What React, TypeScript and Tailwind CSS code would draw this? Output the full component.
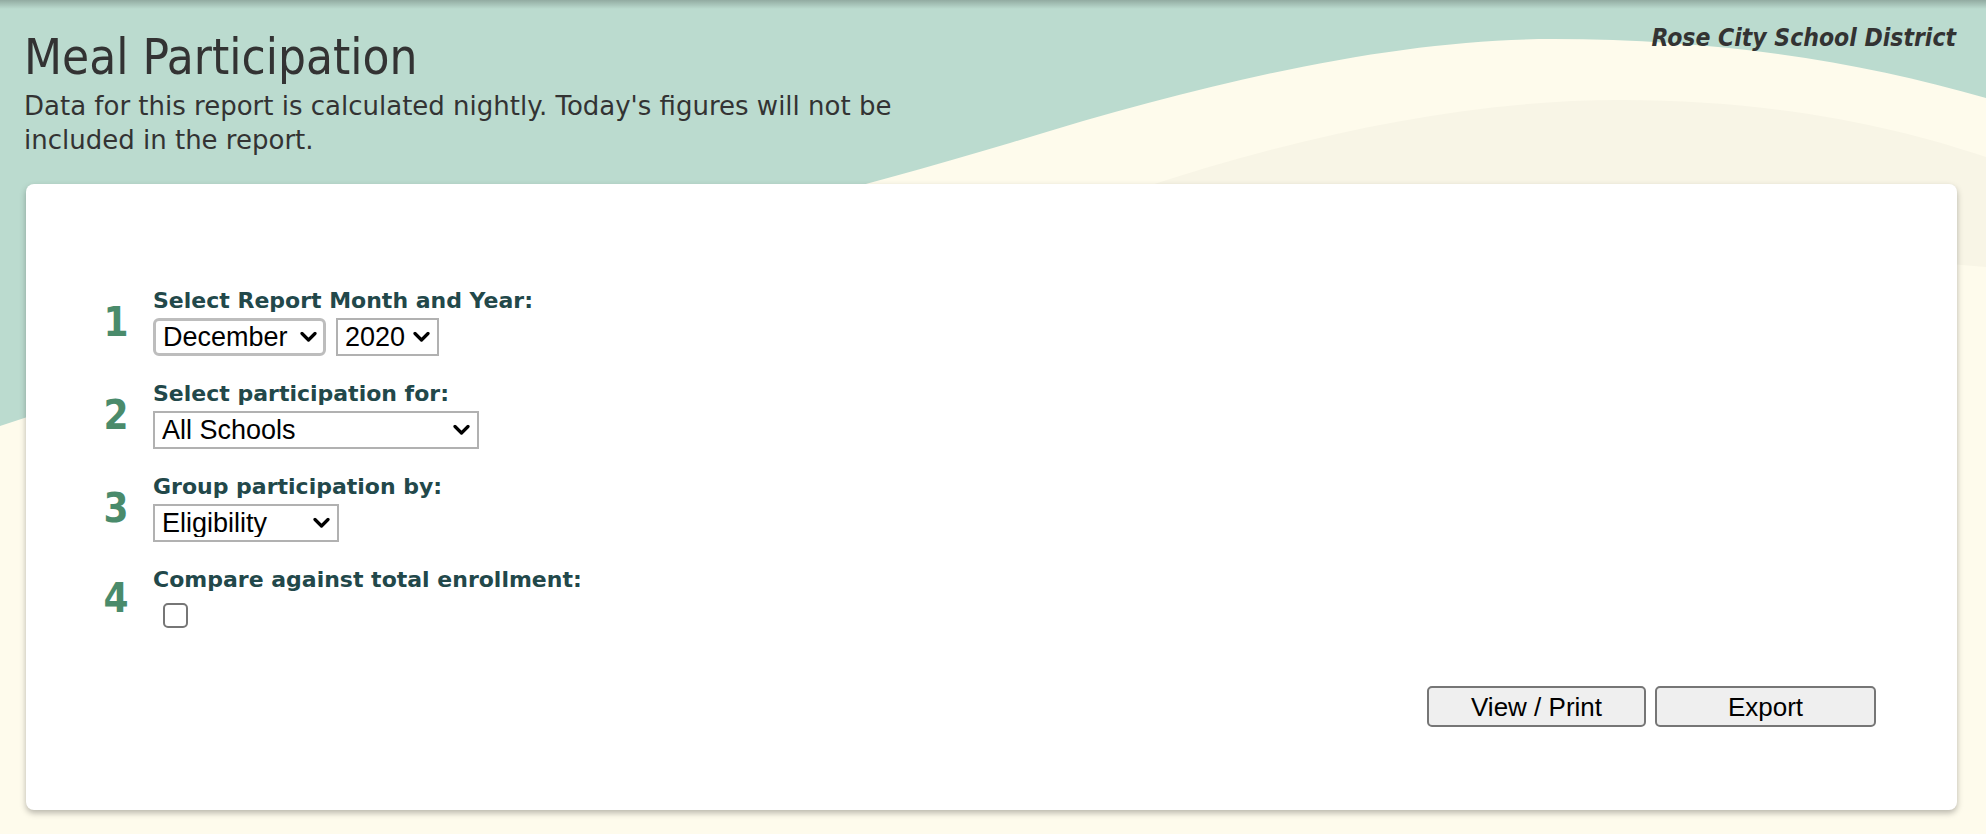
import React from "react";

const Chevron: React.FC = () => (
  <svg
    className="pointer-events-none absolute right-[9px] top-1/2 -translate-y-1/2"
    width="17"
    height="11"
    viewBox="0 0 17 11"
  >
    <path d="M2 2 L8.5 8.5 L15 2" fill="none" stroke="#000" strokeWidth="3.2" strokeLinecap="round" strokeLinejoin="round" />
  </svg>
);

const Dropdown: React.FC<{ value: string; options: string[]; className: string; focused?: boolean }> = ({
  value,
  options,
  className,
  focused,
}) => (
  <div className={`relative ${className}`}>
    <select
      defaultValue={value}
      className={`h-[38px] w-full appearance-none bg-white pl-[7px] pr-[30px] font-['Liberation_Sans',Arial,sans-serif] text-[27px] leading-none text-black outline-none ${
        focused ? "rounded-[6px] border-[3px] border-[#bdbdbd]" : "border-2 border-[#b1b1b1]"
      }`}
    >
      {options.map((o) => (
        <option key={o}>{o}</option>
      ))}
    </select>
    <Chevron />
  </div>
);

const Step: React.FC<{ n: number; label: string; children: React.ReactNode }> = ({ n, label, children }) => (
  <div className="flex items-center">
    <div className="w-[40px] text-center font-['DejaVu_Sans_Condensed','DejaVu_Sans',sans-serif] text-[40px] font-bold leading-none text-[#4a8b6b] [font-stretch:condensed]">
      {n}
    </div>
    <div className="ml-[17px] flex flex-col">
      <div className="font-['DejaVu_Sans',sans-serif] text-[22px] font-bold leading-[26px] text-[#22484a]">{label}</div>
      <div className="mt-[4px] flex">{children}</div>
    </div>
  </div>
);

const Background: React.FC = () => (
  <svg className="absolute inset-0 h-full w-full" viewBox="0 0 1986 834" preserveAspectRatio="none">
    <defs>
      <linearGradient id="topShade" x1="0" y1="0" x2="0" y2="1">
        <stop offset="0" stopColor="#000" stopOpacity="0.22" />
        <stop offset="1" stopColor="#000" stopOpacity="0" />
      </linearGradient>
    </defs>
    <rect width="1986" height="834" fill="#bbdbcf" />
    <path
      d="M0 426 C 380 300 720 230 1010 143 C 1220 78 1400 39 1553 39 C 1720 39 1860 62 1986 98 L1986 834 L0 834 Z"
      fill="#fefbec"
    />
    <path
      d="M1000 240 C 1200 160 1420 100 1620 100 C 1780 100 1900 128 1986 157 L1986 267 C 1700 240 1300 250 1000 300 Z"
      fill="#f8f5e6"
    />
    <rect width="1986" height="9" fill="url(#topShade)" />
  </svg>
);

export default function App() {
  return (
    <div className="relative h-[834px] w-full overflow-hidden">
      <Background />
      <div className="relative flex flex-col">
        <header className="flex items-start justify-between pl-[24px] pr-[30px]">
          <div className="pt-[30px]">
            <h1 className="font-['DejaVu_Sans_Condensed','DejaVu_Sans',sans-serif] text-[49px] leading-[56px] text-[#333333] [font-stretch:condensed]">
              Meal Participation
            </h1>
            <p className="mt-[3px] w-[930px] font-['DejaVu_Sans',sans-serif] text-[26px] leading-[34px] text-[#333333]">
              Data for this report is calculated nightly. Today's figures will not be included in the report.
            </p>
          </div>
          <div className="pt-[24px] font-['DejaVu_Sans_Condensed','DejaVu_Sans',sans-serif] text-[24.5px] leading-[28px] font-bold italic text-[#333333] [font-stretch:condensed]">
            Rose City School District
          </div>
        </header>

        <main className="mr-[29px] ml-[26px] mt-[27px] flex h-[626px] flex-col rounded-[8px] bg-white pt-[104px] pr-[81px] pl-[70px] shadow-[0_3px_6px_rgba(0,0,0,0.28)]">
          <div className="flex flex-col gap-[25px]">
            <Step n={1} label="Select Report Month and Year:">
              <Dropdown
                value="December"
                options={["January", "February", "March", "April", "May", "June", "July", "August", "September", "October", "November", "December"]}
                className="w-[173px]"
                focused
              />
              <Dropdown value="2020" options={["2018", "2019", "2020", "2021"]} className="ml-[10px] w-[103px]" />
            </Step>
            <Step n={2} label="Select participation for:">
              <Dropdown value="All Schools" options={["All Schools"]} className="w-[326px]" />
            </Step>
            <Step n={3} label="Group participation by:">
              <Dropdown value="Eligibility" options={["Eligibility", "Grade", "School"]} className="w-[186px]" />
            </Step>
            <Step n={4} label="Compare against total enrollment:">
              <input
                type="checkbox"
                className="mt-[6px] ml-[10px] h-[25px] w-[25px] appearance-none rounded-[5px] border-2 border-[#767676] bg-white"
              />
            </Step>
          </div>

          <div className="mt-[58px] flex justify-end gap-[9px] font-['Liberation_Sans',Arial,sans-serif]">
            <button className="h-[41px] w-[219px] rounded-[5px] border-2 border-[#767676] bg-[#efefef] text-[26px] text-black">
              View / Print
            </button>
            <button className="h-[41px] w-[221px] rounded-[5px] border-2 border-[#767676] bg-[#efefef] text-[26px] text-black">
              Export
            </button>
          </div>
        </main>
      </div>
    </div>
  );
}
